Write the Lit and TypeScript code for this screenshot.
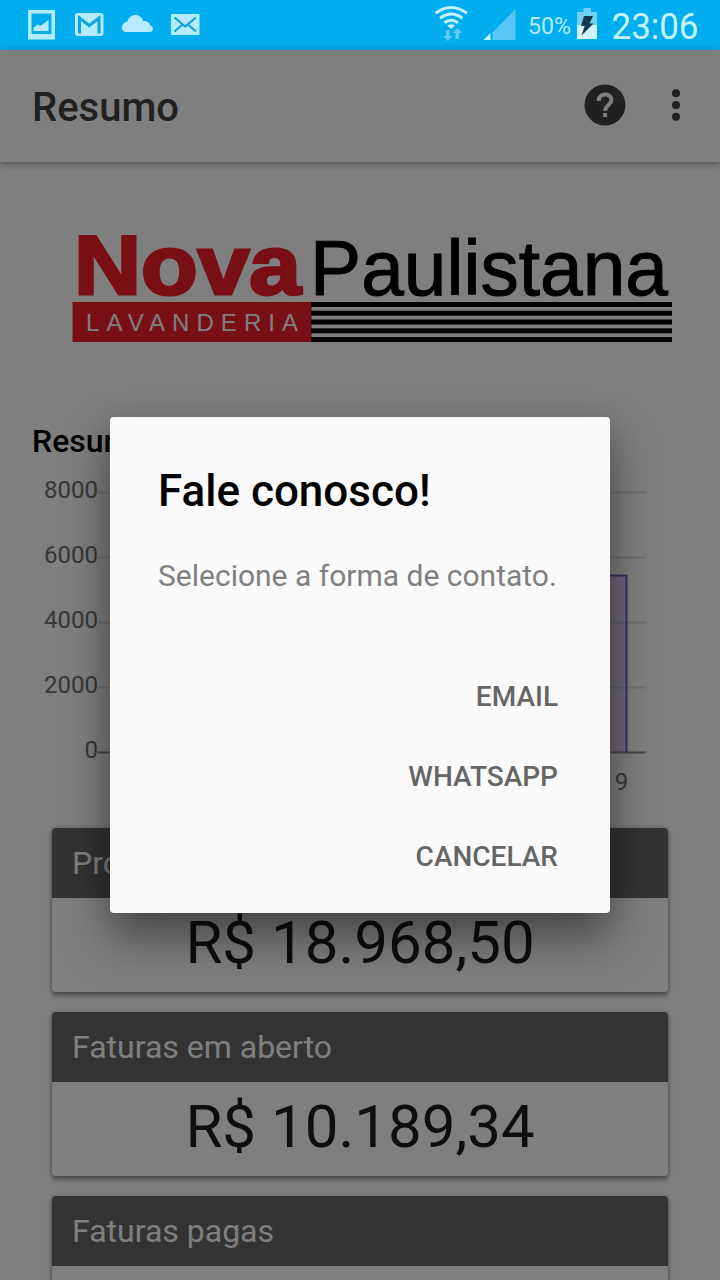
import { LitElement, html, css, svg } from "lit";
import { customElement, property } from "lit/decorators.js";

@customElement("status-bar")
class StatusBar extends LitElement {
  static styles = css`
    :host { display: block; }
    svg { display: block; }
    .clock { font: 400 36px Roboto, sans-serif; }
    .percent { font: 400 24px Roboto, sans-serif; }
  `;
  render() {
    return html`<svg width="720" height="50" viewBox="0 0 720 50">
      <rect width="720" height="50" fill="#00aeef" />
      <g fill="#b5eaff">
        <path fill-rule="evenodd" d="M28 10h27v29.500h-27zM31.500 13.500v20.500h20v-20.500z" />
        <path d="M33.500 31v-3.500l4-3 3 1.500 8-6v11z" />
        <rect x="75" y="13" width="28.500" height="23" rx="3" />
        <path d="M122 28c0-4 2.500-6 5.500-6.500 1-4 4-6.500 8-6.500 4 0 7 2.500 7.500 6 4-.500 6.500 1.500 7 4.500 2 .700 3 1.800 3 3.500 0 2-1.500 3-3.500 3h-24c-2.300 0-3.500-1.800-3.500-4z" />
        <rect x="171" y="14" width="28.500" height="21" />
      </g>
      <g fill="none" stroke="#10a4dc" stroke-width="3">
        <path d="M79.500 33.500V18l9.700 7.500 9.800-7.500v15.500" />
        <path stroke-width="2.200" d="M174.500 17.500l10.700 9 10.700-9M174.500 31.500l7.500-6.500M196 31.500l-7.500-6.500" />
      </g>
      <g fill="none" stroke="#c5f3ff" stroke-width="3">
        <path d="M435.500 13.200q15.700-11.500 31.400 0" />
        <path d="M440 18.200q11.200-8.500 22.400 0" />
        <path d="M444.500 22.800q6.700-5.200 13.400 0" />
      </g>
      <path fill="#c5f3ff" d="M447.300 25.500q3.900-2.600 7.800 0l-3.900 3.500z" />
      <path fill="#62cbf5" d="M446 30h3.500v6h3l-4.700 5-4.700-5h2.900zM455.500 39v-6h-2.800l4.700-5 4.700 5h-3v6z" />
      <path fill="#58c7f5" d="M492.500 32.500L515.500 9v31h-23z" />
      <path fill="#c5f3ff" d="M483.500 40l7-7v7z" />
      <text class="percent" x="528" y="34" textLength="43" lengthAdjust="spacingAndGlyphs" fill="#b5eaff">50%</text>
      <path fill="#72d0f5" d="M583.500 8h7.500v4h6v13h-20v-13h6.500z" />
      <path fill="#d2f3ff" d="M577 25h20v14h-20z" />
      <path fill="#18384c" d="M584 16h9l-3.500 7.500h4l-12 12 3.200-9.500h-3.700z" />
      <text class="clock" x="611.500" y="39" textLength="87" lengthAdjust="spacingAndGlyphs" fill="#c5f3ff">23:06</text>
    </svg>`;
  }
}

@customElement("summary-card")
class SummaryCard extends LitElement {
  static styles = css`
    :host { display: block; border-radius: 4px; overflow: hidden; background: #fff;
      box-shadow: 0 4px 4px rgba(0,0,0,.28), 0 1px 6px rgba(0,0,0,.25), 0 0 2px rgba(0,0,0,.2); }
    .head { height: 70px; box-sizing: border-box; padding: 0 20px; line-height: 70px; font-size: 32px; color: #fff; background: #666; }
    .value { height: 94px; line-height: 89px; text-align: center; font-size: 60px; color: #1c1c1c; }
  `;
  @property() label = "";
  @property() amount = "";
  render() {
    return html`<div class="head">${this.label}</div><div class="value">${this.amount}</div>`;
  }
}

@customElement("app-root")
class AppRoot extends LitElement {
  static styles = css`
    :host { display: block; position: relative; width: 720px; height: 1280px; overflow: hidden;
      background: #fff; font-family: Roboto, sans-serif; }
    .page { display: flex; flex-direction: column; }
    .bar { display: flex; align-items: center; justify-content: space-between; height: 112px; box-sizing: border-box;
      padding: 0 28px 2px 32px; background: #fff; box-shadow: 0 2px 8px rgba(0,0,0,.38); }
    .bar h1 { margin: 0; padding-top: 4px; font-size: 40px; font-weight: 500; color: #424242; }
    .actions { display: flex; align-items: center; gap: 36px; }
    .actions svg, .logo, .chart { display: block; }
    .logo { margin: 64px 0 0 64px; overflow: visible; }
    .section { margin: 71px 0 0 32px; font-size: 32px; line-height: 40px; font-weight: 500; color: #000; }
    .chart { margin-top: 7px; }
    .axis { font: 24px Roboto, sans-serif; fill: #707070; }
    .nova { font: 700 84px "Liberation Sans", sans-serif; }
    .paulistana { font: 400 77px "Liberation Sans", sans-serif; }
    .lav { font: 400 24px "Liberation Sans", sans-serif; }
    .cards { display: flex; flex-direction: column; gap: 20px; padding: 0 52px; margin-top: 20px; }
    .scrim { position: absolute; inset: 50px 0 0 0; background: rgba(0,0,0,.5); }
    .dialog { position: absolute; left: 110px; top: 417px; width: 500px; height: 496px; box-sizing: border-box;
      padding: 48px 36px 17px 48px; border-radius: 4px; background: #fafafa; display: flex; flex-direction: column;
      box-shadow: 0 26px 48px rgba(0,0,0,.4), 0 4px 30px rgba(0,0,0,.15); }
    .dialog h2 { margin: 0; font-size: 44px; line-height: 52px; font-weight: 500; color: #000; }
    .dialog p { margin: 41px 0 0; font-size: 30px; line-height: 36px; color: #808080; white-space: nowrap; }
    .buttons { display: flex; flex-direction: column; align-items: flex-end; gap: 8px; margin-top: auto; padding-bottom: 4px; }
    .buttons button { height: 72px; padding: 0 16px; border: 0; background: none; font: 500 28px Roboto, sans-serif; color: #666; }
  `;

  private ticks = [8000, 6000, 4000, 2000, 0];
  private cards = [
    ["Produção", "R$ 18.968,50"],
    ["Faturas em aberto", "R$ 10.189,34"],
    ["Faturas pagas", ""],
  ];

  render() {
    return html`
      <div class="page">
        <status-bar></status-bar>
        <header class="bar">
          <h1>Resumo</h1>
          <div class="actions">
            <svg width="42" height="42" viewBox="0 0 42 42">
              <circle cx="21" cy="21" r="20.500" fill="#424242" />
              <path d="M14.700 17c0-3.900 2.700-6.600 6.400-6.600 3.800 0 6.300 2.300 6.300 5.700 0 4.500-6.300 5.300-6.300 10.700" fill="none" stroke="#fff" stroke-width="4" />
              <rect x="19" y="29" width="4.200" height="4" fill="#fff" />
            </svg>
            <svg width="30" height="42" viewBox="0 0 30 42" fill="#424242">
              <circle cx="14" cy="9.300" r="4" /><circle cx="14" cy="21" r="4" /><circle cx="14" cy="32.800" r="4" />
            </svg>
          </div>
        </header>
        <svg class="logo" width="620" height="124" viewBox="64 226 620 124">
          <text class="nova" x="74" y="294" textLength="227" lengthAdjust="spacingAndGlyphs" fill="#f01e28" stroke="#f01e28" stroke-width="3">Nova</text>
          <text class="paulistana" x="310" y="295" textLength="358" lengthAdjust="spacingAndGlyphs" fill="#000" stroke="#000" stroke-width="1">Paulistana</text>
          <rect x="72.500" y="302" width="239" height="40" fill="#f01e28" />
          <text class="lav" x="86" y="330.500" textLength="212" fill="#fff">LAVANDERIA</text>
          ${[302, 310.700, 319.500, 328.300, 337].map((y) => svg`<rect x="311" y=${y} width="361" height="5" fill="#000" />`)}
        </svg>
        <div class="section">Resumo</div>
        <svg class="chart" width="720" height="340" viewBox="0 468 720 340">
          ${this.ticks.map((t, i) => svg`
            <rect x="98" y=${491.500 + i * 65} width="547.500" height="2" fill=${t ? "#e0e0e0" : "#8c8c8c"} />
            <text class="axis" x="98" y=${498 + i * 65} text-anchor="end">${t}</text>`)}
          <rect x="500" y="575.500" width="126.500" height="176.500" fill="#7e57c2" fill-opacity=".3" />
          <path d="M500 575.500h126.500V752" fill="none" stroke="#7e57c2" stroke-width="2" />
          <text class="axis" x="621.500" y="790" text-anchor="middle">9</text>
        </svg>
        <div class="cards">
          ${this.cards.map(([label, amount]) => html`<summary-card .label=${label} .amount=${amount}></summary-card>`)}
        </div>
      </div>
      <div class="scrim"></div>
      <section class="dialog">
        <h2>Fale conosco!</h2>
        <p>Selecione a forma de contato.</p>
        <div class="buttons">
          <button>EMAIL</button><button>WHATSAPP</button><button>CANCELAR</button>
        </div>
      </section>
    `;
  }
}
